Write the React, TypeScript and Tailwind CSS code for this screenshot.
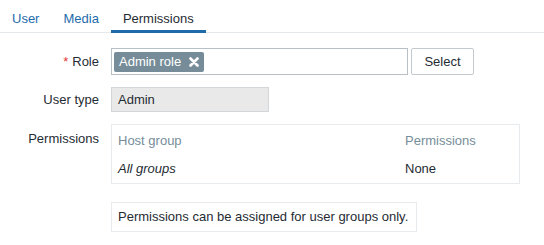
export default function App() {
  return (
    <div className="w-[544px] h-[245px] bg-white text-[13px] text-[#1f2c33] font-['Liberation_Sans',Arial,sans-serif]">
      {/* TABS */}
      <nav className="flex h-[33px] border-b border-[#e6e9eb]">
        <span className="px-3 pt-[9px] text-[#1f6bab]">User</span>
        <span className="px-3 pt-[9px] text-[#1f6bab]">Media</span>
        <span className="px-3 pt-[9px] border-b-[3px] border-[#1f6aa8] -mb-px">Permissions</span>
      </nav>

      {/* FORM */}
      <div className="pt-[15px] flex flex-col">
        {/* Role */}
        <div className="flex items-center h-[27px]">
          <div className="w-[99px] text-right">
            <span className="text-[#e33734] mr-1">*</span>Role
          </div>
          <div className="ml-[12px] w-[297px] h-[27px] border border-[#b6c0c5] flex items-center px-[2px]">
            <span className="h-[20px] w-[90px] bg-[#768d99] text-white rounded-[2px] flex items-center pl-[5px] gap-[8px]">
              Admin role
              <svg width="10" height="10" viewBox="0 0 10 10">
                <path d="M1.5 1.5l7 7M8.5 1.5l-7 7" stroke="white" strokeWidth="2.6" strokeLinecap="round" />
              </svg>
            </span>
          </div>
          <button className="ml-[3px] w-[63px] h-[27px] border border-[#c3cbcf] rounded-[2px] bg-white">
            Select
          </button>
        </div>

        {/* User type */}
        <div className="flex items-center mt-[12px] h-[25px]">
          <div className="w-[99px] text-right">User type</div>
          <div className="ml-[12px] w-[158px] h-[25px] bg-[#e9e9e9] border border-[#d3d7d9] flex items-center px-[6px]">
            Admin
          </div>
        </div>

        {/* Permissions */}
        <div className="flex mt-[12px]">
          <div className="w-[99px] text-right pt-[5px]">Permissions</div>
          <div className="ml-[12px] w-[409px] h-[60px] border border-[#e8ebed] px-[6px] pt-[6px]">
            <div className="flex text-[#768d99]">
              <span className="w-[287px]">Host group</span>
              <span>Permissions</span>
            </div>
            <div className="flex mt-[8px]">
              <span className="w-[287px] italic">All groups</span>
              <span>None</span>
            </div>
          </div>
        </div>

        {/* Info */}
        <div className="flex mt-[18px]">
          <div className="w-[99px]" />
          <div className="ml-[12px] w-[306px] h-[30px] border border-[#e8ebed] flex items-center px-[6px]">
            Permissions can be assigned for user groups only.
          </div>
        </div>
      </div>
    </div>
  );
}
